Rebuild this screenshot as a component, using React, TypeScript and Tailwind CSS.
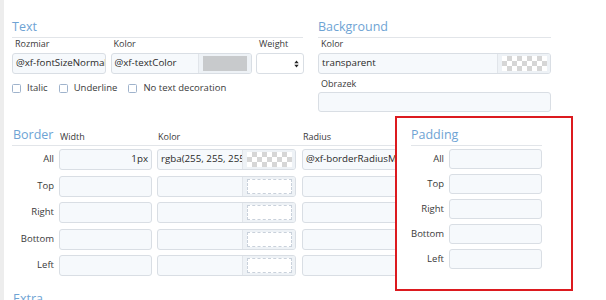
import React from "react";

const FONT = { fontFamily: '"Open Sans", "Noto Sans", sans-serif' };

function Input({
  w,
  h = "h-[21px]",
  text,
  right,
  swatch,
  dashed,
  checker,
}: {
  w: string;
  h?: string;
  text?: string;
  right?: boolean;
  swatch?: boolean;
  dashed?: boolean;
  checker?: boolean;
}) {
  return (
    <div
      className={`${w} ${h} shrink-0 rounded-[3px] border border-[#d9dee4] bg-[#f6f9fc] flex items-stretch overflow-hidden`}
    >
      <div
        className={`flex-1 min-w-0 flex items-center px-[3px] text-[9.75px] text-[#2a2a2a] whitespace-nowrap overflow-hidden ${
          right ? "justify-end" : ""
        }`}
      >
        {text}
      </div>
      {(swatch || dashed || checker) && (
        <div className="w-[53px] shrink-0 border-l border-[#e1e5ea] bg-[#eef2f6] flex items-center justify-center py-[2px]">
          {swatch && <div className="w-[44px] h-[15px] bg-[#c8cacc]" />}
          {checker && (
            <div className="w-[45px] h-[15px] bg-[repeating-conic-gradient(#d6d6d6_0_25%,#ffffff_0_50%)] bg-[length:10px_10px]" />
          )}
          {dashed && (
            <div className="w-[45px] h-[15px] border border-dashed border-[#c9d1db] bg-white" />
          )}
        </div>
      )}
    </div>
  );
}

function Label({ children, className = "" }: { children: React.ReactNode; className?: string }) {
  return (
    <div className={`text-[9px] leading-[12px] text-[#3a3a3a] pl-[3px] ${className}`}>{children}</div>
  );
}

function Heading({ children }: { children: React.ReactNode }) {
  return (
    <div className="text-[12.5px] leading-[16px] text-[#6ea3d4] pb-[2px] border-b border-[#e2e5e9]">
      {children}
    </div>
  );
}

function Checkbox({ label }: { label: string }) {
  return (
    <div className="flex items-center gap-[6px]">
      <div className="w-[9px] h-[9px] rounded-[1.5px] border border-[#9fb3cc] bg-white" />
      <span className="text-[9.5px] leading-[12px] text-[#3a3a3a]">{label}</span>
    </div>
  );
}

function SelectArrows() {
  return (
    <svg width="5" height="8" viewBox="0 0 5 8">
      <path d="M2.5 0.5 L4.7 3.2 H0.3 Z" fill="#222" />
      <path d="M2.5 7.5 L4.7 4.8 H0.3 Z" fill="#222" />
    </svg>
  );
}

const borderRows: { label: string; width?: string; color?: string; radius?: string }[] = [
  { label: "All", width: "1px", color: "rgba(255, 255, 255, 0.1)", radius: "@xf-borderRadiusMedium" },
  { label: "Top" },
  { label: "Right" },
  { label: "Bottom" },
  { label: "Left" },
];

export default function App() {
  return (
    <div className="w-[606px] h-[300px] overflow-hidden bg-white flex" style={FONT}>
      <div className="w-[4px] shrink-0 bg-[#ededed]" />
      <div className="flex-1 pl-[8px] pt-[19px] flex flex-col">
        {/* Top section */}
        <div className="flex gap-[15px]">
          <div className="w-[291px] flex flex-col">
            <Heading>Text</Heading>
            <div className="flex gap-[4.5px]">
              <div className="flex flex-col">
                <Label className="h-[15px]">Rozmiar</Label>
                <Input w="w-[94px]" text="@xf-fontSizeNormal" />
              </div>
              <div className="flex flex-col">
                <Label className="h-[15px]">Kolor</Label>
                <Input w="w-[141px]" text="@xf-textColor" swatch />
              </div>
              <div className="flex flex-col">
                <Label className="h-[15px]">Weight</Label>
                <div className="w-[48px] h-[21px] rounded-[3px] border border-[#d9dee4] bg-white flex items-center justify-end pr-[4px]">
                  <SelectArrows />
                </div>
              </div>
            </div>
            <div className="flex gap-[11px] mt-[8px]">
              <Checkbox label="Italic" />
              <Checkbox label="Underline" />
              <Checkbox label="No text decoration" />
            </div>
          </div>
          <div className="w-[233px] flex flex-col">
            <Heading>Background</Heading>
            <Label className="h-[15px]">Kolor</Label>
            <Input w="w-[233px]" text="transparent" checker />
            <Label className="mt-[4px] h-[14px]">Obrazek</Label>
            <Input w="w-[233px]" h="h-[20px]" />
          </div>
        </div>

        {/* Border + Padding */}
        <div className="flex items-start mt-[4px]">
          <div className="w-[383px] shrink-0 pt-[11px] overflow-hidden">
            <div className="flex items-end border-b border-[#e2e5e9] h-[19px] pb-[2px] whitespace-nowrap">
              <div className="w-[47px] shrink-0 text-[12.5px] leading-[16px] text-[#6ea3d4] pl-[1px]">Border</div>
              <div className="w-[98px] shrink-0 text-[9px] leading-[12px] text-[#3a3a3a] pl-[1px]">Width</div>
              <div className="w-[145px] shrink-0 text-[9px] leading-[12px] text-[#3a3a3a] pl-[1px]">Kolor</div>
              <div className="shrink-0 text-[9px] leading-[12px] text-[#3a3a3a] pl-[1px]">Radius</div>
            </div>
            <div className="flex flex-col gap-[5.5px] mt-[3px]">
              {borderRows.map((r) => (
                <div key={r.label} className="flex items-center">
                  <div className="w-[42px] shrink-0 text-right text-[9.5px] text-[#3a3a3a]">{r.label}</div>
                  <div className="ml-[5px]">
                    <Input w="w-[93px]" text={r.width} right />
                  </div>
                  <div className="ml-[5px]">
                    <Input w="w-[139px]" text={r.color} checker={r.label === "All"} dashed={r.label !== "All"} />
                  </div>
                  <div className="ml-[6px]">
                    <Input w="w-[100px]" text={r.radius} />
                  </div>
                </div>
              ))}
            </div>
          </div>
          <div className="w-[178px] h-[175px] shrink-0 border-2 border-[#dc1a1f] bg-white pl-[14px] pt-[9px]">
            <div className="w-[131px]">
              <Heading>Padding</Heading>
              <div className="flex flex-col gap-[5px] mt-[3px]">
                {["All", "Top", "Right", "Bottom", "Left"].map((l) => (
                  <div key={l} className="flex items-center">
                    <div className="w-[33px] shrink-0 text-right text-[9.5px] text-[#3a3a3a]">{l}</div>
                    <div className="ml-[5px]">
                      <Input w="w-[93px]" h="h-[20px]" />
                    </div>
                  </div>
                ))}
              </div>
            </div>
          </div>
        </div>

        <div className="w-[383px] text-[12.5px] leading-[16px] text-[#6ea3d4] pl-[1px]">Extra</div>
      </div>
    </div>
  );
}
